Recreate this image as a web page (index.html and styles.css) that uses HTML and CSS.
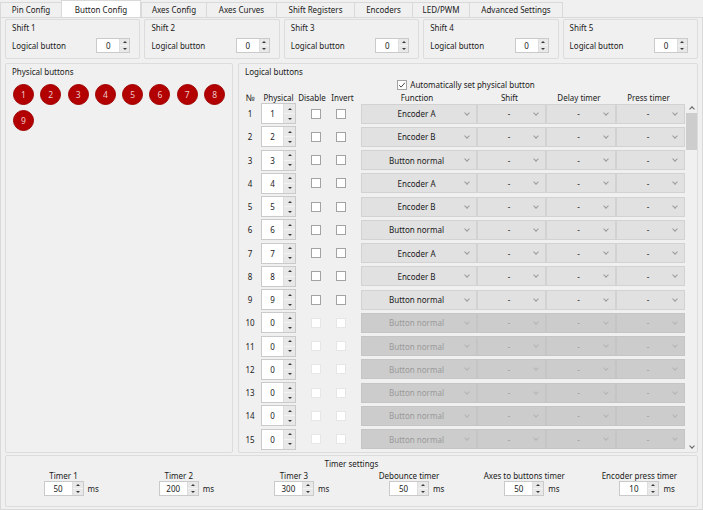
FILE: index.html
```html
<!DOCTYPE html>
<html>
<head>
<meta charset="utf-8">
<title>Button Config</title>
<link rel="stylesheet" href="styles.css">
</head>
<body>
<div class="window">
  <div class="tabs">
    <div class="tab t1">Pin Config</div>
    <div class="tab t2 active">Button Config</div>
    <div class="tab t3">Axes Config</div>
    <div class="tab t4">Axes Curves</div>
    <div class="tab t5">Shift Registers</div>
    <div class="tab t6">Encoders</div>
    <div class="tab t7">LED/PWM</div>
    <div class="tab t8 last">Advanced Settings</div>
  </div>
  <div class="pane">
    <div class="shifts">
      <div class="group">
        <div class="gtitle">Shift 1</div>
        <div class="shift-row"><span>Logical button</span><div class="spin spin-s"><span class="val">0</span><span class="arrows"><i class="up"></i><i class="dn"></i></span></div></div>
      </div>
      <div class="group">
        <div class="gtitle">Shift 2</div>
        <div class="shift-row"><span>Logical button</span><div class="spin spin-s"><span class="val">0</span><span class="arrows"><i class="up"></i><i class="dn"></i></span></div></div>
      </div>
      <div class="group">
        <div class="gtitle">Shift 3</div>
        <div class="shift-row"><span>Logical button</span><div class="spin spin-s"><span class="val">0</span><span class="arrows"><i class="up"></i><i class="dn"></i></span></div></div>
      </div>
      <div class="group">
        <div class="gtitle">Shift 4</div>
        <div class="shift-row"><span>Logical button</span><div class="spin spin-s"><span class="val">0</span><span class="arrows"><i class="up"></i><i class="dn"></i></span></div></div>
      </div>
      <div class="group">
        <div class="gtitle">Shift 5</div>
        <div class="shift-row"><span>Logical button</span><div class="spin spin-s"><span class="val">0</span><span class="arrows"><i class="up"></i><i class="dn"></i></span></div></div>
      </div>
    </div>

    <div class="main">
      <div class="group phys">
        <div class="gtitle">Physical buttons</div>
        <div class="circles">
          <span class="pb">1</span><span class="pb">2</span><span class="pb">3</span><span class="pb">4</span><span class="pb">5</span><span class="pb">6</span><span class="pb">7</span><span class="pb">8</span><span class="pb">9</span>
        </div>
      </div>

      <div class="group logical">
        <div class="gtitle">Logical buttons</div>
        <div class="auto"><span class="cb checked"><svg width="8" height="8" viewBox="0 0 8 8"><path d="M1.2 4.2 L3.1 6.1 L6.9 1.8" fill="none" stroke="#333" stroke-width="0.9"/></svg></span><span>Automatically set physical button</span></div>
        <div class="lhead">
          <span class="nosign">№</span><span>Physical</span><span>Disable</span><span>Invert</span><span></span><span class="hc">Function</span><span class="hc">Shift</span><span class="hc">Delay timer</span><span class="hc">Press timer</span>
        </div>
        <div class="scroll">
          <div class="rows">
            <div class="lrow"><span class="num">1</span><div class="spin spin-r"><span class="val">1</span><span class="arrows"><i class="up"></i><i class="dn"></i></span></div><span class="cdis"><span class="cb"></span></span><span class="cinv"><span class="cb"></span></span><span></span><span class="combo"><span class="txt">Encoder A</span></span><span class="combo"><span class="txt">-</span></span><span class="combo"><span class="txt">-</span></span><span class="combo"><span class="txt">-</span></span></div>
            <div class="lrow"><span class="num">2</span><div class="spin spin-r"><span class="val">2</span><span class="arrows"><i class="up"></i><i class="dn"></i></span></div><span class="cdis"><span class="cb"></span></span><span class="cinv"><span class="cb"></span></span><span></span><span class="combo"><span class="txt">Encoder B</span></span><span class="combo"><span class="txt">-</span></span><span class="combo"><span class="txt">-</span></span><span class="combo"><span class="txt">-</span></span></div>
            <div class="lrow"><span class="num">3</span><div class="spin spin-r"><span class="val">3</span><span class="arrows"><i class="up"></i><i class="dn"></i></span></div><span class="cdis"><span class="cb"></span></span><span class="cinv"><span class="cb"></span></span><span></span><span class="combo"><span class="txt">Button normal</span></span><span class="combo"><span class="txt">-</span></span><span class="combo"><span class="txt">-</span></span><span class="combo"><span class="txt">-</span></span></div>
            <div class="lrow"><span class="num">4</span><div class="spin spin-r"><span class="val">4</span><span class="arrows"><i class="up"></i><i class="dn"></i></span></div><span class="cdis"><span class="cb"></span></span><span class="cinv"><span class="cb"></span></span><span></span><span class="combo"><span class="txt">Encoder A</span></span><span class="combo"><span class="txt">-</span></span><span class="combo"><span class="txt">-</span></span><span class="combo"><span class="txt">-</span></span></div>
            <div class="lrow"><span class="num">5</span><div class="spin spin-r"><span class="val">5</span><span class="arrows"><i class="up"></i><i class="dn"></i></span></div><span class="cdis"><span class="cb"></span></span><span class="cinv"><span class="cb"></span></span><span></span><span class="combo"><span class="txt">Encoder B</span></span><span class="combo"><span class="txt">-</span></span><span class="combo"><span class="txt">-</span></span><span class="combo"><span class="txt">-</span></span></div>
            <div class="lrow"><span class="num">6</span><div class="spin spin-r"><span class="val">6</span><span class="arrows"><i class="up"></i><i class="dn"></i></span></div><span class="cdis"><span class="cb"></span></span><span class="cinv"><span class="cb"></span></span><span></span><span class="combo"><span class="txt">Button normal</span></span><span class="combo"><span class="txt">-</span></span><span class="combo"><span class="txt">-</span></span><span class="combo"><span class="txt">-</span></span></div>
            <div class="lrow"><span class="num">7</span><div class="spin spin-r"><span class="val">7</span><span class="arrows"><i class="up"></i><i class="dn"></i></span></div><span class="cdis"><span class="cb"></span></span><span class="cinv"><span class="cb"></span></span><span></span><span class="combo"><span class="txt">Encoder A</span></span><span class="combo"><span class="txt">-</span></span><span class="combo"><span class="txt">-</span></span><span class="combo"><span class="txt">-</span></span></div>
            <div class="lrow"><span class="num">8</span><div class="spin spin-r"><span class="val">8</span><span class="arrows"><i class="up"></i><i class="dn"></i></span></div><span class="cdis"><span class="cb"></span></span><span class="cinv"><span class="cb"></span></span><span></span><span class="combo"><span class="txt">Encoder B</span></span><span class="combo"><span class="txt">-</span></span><span class="combo"><span class="txt">-</span></span><span class="combo"><span class="txt">-</span></span></div>
            <div class="lrow"><span class="num">9</span><div class="spin spin-r"><span class="val">9</span><span class="arrows"><i class="up"></i><i class="dn"></i></span></div><span class="cdis"><span class="cb"></span></span><span class="cinv"><span class="cb"></span></span><span></span><span class="combo"><span class="txt">Button normal</span></span><span class="combo"><span class="txt">-</span></span><span class="combo"><span class="txt">-</span></span><span class="combo"><span class="txt">-</span></span></div>
            <div class="lrow off"><span class="num">10</span><div class="spin spin-r"><span class="val">0</span><span class="arrows"><i class="up"></i><i class="dn"></i></span></div><span class="cdis"><span class="cb"></span></span><span class="cinv"><span class="cb"></span></span><span></span><span class="combo"><span class="txt">Button normal</span></span><span class="combo"><span class="txt">-</span></span><span class="combo"><span class="txt">-</span></span><span class="combo"><span class="txt">-</span></span></div>
            <div class="lrow off"><span class="num">11</span><div class="spin spin-r"><span class="val">0</span><span class="arrows"><i class="up"></i><i class="dn"></i></span></div><span class="cdis"><span class="cb"></span></span><span class="cinv"><span class="cb"></span></span><span></span><span class="combo"><span class="txt">Button normal</span></span><span class="combo"><span class="txt">-</span></span><span class="combo"><span class="txt">-</span></span><span class="combo"><span class="txt">-</span></span></div>
            <div class="lrow off"><span class="num">12</span><div class="spin spin-r"><span class="val">0</span><span class="arrows"><i class="up"></i><i class="dn"></i></span></div><span class="cdis"><span class="cb"></span></span><span class="cinv"><span class="cb"></span></span><span></span><span class="combo"><span class="txt">Button normal</span></span><span class="combo"><span class="txt">-</span></span><span class="combo"><span class="txt">-</span></span><span class="combo"><span class="txt">-</span></span></div>
            <div class="lrow off"><span class="num">13</span><div class="spin spin-r"><span class="val">0</span><span class="arrows"><i class="up"></i><i class="dn"></i></span></div><span class="cdis"><span class="cb"></span></span><span class="cinv"><span class="cb"></span></span><span></span><span class="combo"><span class="txt">Button normal</span></span><span class="combo"><span class="txt">-</span></span><span class="combo"><span class="txt">-</span></span><span class="combo"><span class="txt">-</span></span></div>
            <div class="lrow off"><span class="num">14</span><div class="spin spin-r"><span class="val">0</span><span class="arrows"><i class="up"></i><i class="dn"></i></span></div><span class="cdis"><span class="cb"></span></span><span class="cinv"><span class="cb"></span></span><span></span><span class="combo"><span class="txt">Button normal</span></span><span class="combo"><span class="txt">-</span></span><span class="combo"><span class="txt">-</span></span><span class="combo"><span class="txt">-</span></span></div>
            <div class="lrow off"><span class="num">15</span><div class="spin spin-r"><span class="val">0</span><span class="arrows"><i class="up"></i><i class="dn"></i></span></div><span class="cdis"><span class="cb"></span></span><span class="cinv"><span class="cb"></span></span><span></span><span class="combo"><span class="txt">Button normal</span></span><span class="combo"><span class="txt">-</span></span><span class="combo"><span class="txt">-</span></span><span class="combo"><span class="txt">-</span></span></div>
          </div>
          <div class="vbar">
            <span class="sarrow s-up"></span>
            <span class="thumb"></span>
            <span class="track"></span>
            <span class="sarrow s-dn"></span>
          </div>
        </div>
      </div>
    </div>

    <div class="group timers">
      <div class="gtitle tcenter">Timer settings</div>
      <div class="tcols">
        <div class="tcol"><div class="tlabel">Timer 1</div><div class="trow"><span></span><div class="spin spin-t"><span class="val">50</span><span class="arrows"><i class="up"></i><i class="dn"></i></span></div><span class="ms">ms</span></div></div>
        <div class="tcol"><div class="tlabel">Timer 2</div><div class="trow"><span></span><div class="spin spin-t"><span class="val">200</span><span class="arrows"><i class="up"></i><i class="dn"></i></span></div><span class="ms">ms</span></div></div>
        <div class="tcol"><div class="tlabel">Timer 3</div><div class="trow"><span></span><div class="spin spin-t"><span class="val">300</span><span class="arrows"><i class="up"></i><i class="dn"></i></span></div><span class="ms">ms</span></div></div>
        <div class="tcol"><div class="tlabel">Debounce timer</div><div class="trow"><span></span><div class="spin spin-t"><span class="val">50</span><span class="arrows"><i class="up"></i><i class="dn"></i></span></div><span class="ms">ms</span></div></div>
        <div class="tcol"><div class="tlabel">Axes to buttons timer</div><div class="trow"><span></span><div class="spin spin-t"><span class="val">50</span><span class="arrows"><i class="up"></i><i class="dn"></i></span></div><span class="ms">ms</span></div></div>
        <div class="tcol"><div class="tlabel">Encoder press timer</div><div class="trow"><span></span><div class="spin spin-t"><span class="val">10</span><span class="arrows"><i class="up"></i><i class="dn"></i></span></div><span class="ms">ms</span></div></div>
      </div>
    </div>
  </div>
</div>
</body>
</html>
```

FILE: styles.css
```css
* { box-sizing: border-box; margin: 0; padding: 0; }
html, body { width: 703px; height: 510px; overflow: hidden; }
body {
  background: #f0f0f0;
  font-family: "Noto Sans", "Open Sans", sans-serif;
  font-size: 8px;
  line-height: 11px;
  color: #1a1a1a;
}
.window { width: 703px; height: 510px; display: flex; flex-direction: column; }

/* tabs */
.tabs { display: flex; align-items: flex-end; height: 17px; }
.tab {
  height: 15px; line-height: 14px; text-align: center; white-space: nowrap;
  border-left: 1px solid #d9d9d9; border-top: 1px solid #d9d9d9;
  background: #f0f0f0;
}
.tab.last { border-right: 1px solid #d9d9d9; }
.tab.active { height: 18px; line-height: 17px; background: #fff; margin-bottom: -1px; border-right: 1px solid #d9d9d9; }
.t1 { width: 61px; } .t2 { width: 80px; } .t3 { width: 65px; } .t4 { width: 70px; }
.t5 { width: 78px; } .t6 { width: 58px; } .t7 { width: 57px; } .t8 { width: 94px; }

.pane {
  height: 493px; border: 1px solid #d9d9d9; padding: 1px 4px 1px 4px;
  display: flex; flex-direction: column;
}

.group { border: 1px solid #dcdcdc; border-radius: 2px; }
.gtitle { padding: 2px 0 0 6px; height: 13px; white-space: nowrap; }

/* shifts */
.shifts { display: grid; grid-template-columns: repeat(5, 1fr); gap: 4px; height: 40px; }
.shift-row { display: flex; align-items: center; justify-content: space-between; margin-top: 5px; padding: 0 9px 0 6px; }

/* spin boxes */
.spin { display: flex; background: #fff; border: 1px solid #cacaca; }
.spin .val { flex: 1; text-align: center; display: flex; align-items: center; justify-content: center; }
.spin .arrows { width: 10px; display: flex; flex-direction: column; background: #e8e8e8; border-left: 1px solid #dedede; }
.arrows i { flex: 1; display: flex; align-items: center; justify-content: center; }
.arrows i::before { content: ''; border-left: 2px solid transparent; border-right: 2px solid transparent; }
.arrows .up::before { border-bottom: 2px solid #3a3a3a; }
.arrows .dn::before { border-top: 2px solid #3a3a3a; }
.arrows .up { border-bottom: 1px solid #f4f4f4; }
.spin-s { width: 34px; height: 15px; }
.spin-r { width: 35px; height: 21px; }
.spin-r .arrows { width: 12px; }
.spin-t { width: 40px; height: 15px; }
.spin-t .arrows { width: 11px; }

/* main */
.main { display: flex; gap: 5px; height: 390px; margin-top: 4px; }
.phys { width: 229px; }
.logical { flex: 1; display: flex; flex-direction: column; }
.circles { display: flex; flex-wrap: wrap; column-gap: 6.3px; row-gap: 5px; padding: 7px 0 0 7px; }
.pb {
  width: 21px; height: 21px; border-radius: 50%;
  background: #b30000; border: 1px solid #9e0000; color: #eccaca;
  display: flex; align-items: center; justify-content: center; font-size: 8.5px;
}

.auto { display: flex; justify-content: center; align-items: center; gap: 3px; margin-top: 2px; height: 11px; padding-right: 4px; }
.cb { display: block; width: 10px; height: 10px; border: 1px solid #a3a3a3; background: #fff; }
.cb.checked { display: flex; align-items: center; justify-content: center; }

.lhead, .lrow {
  display: grid;
  grid-template-columns: 22px 35px 32px 29px 4px 116px 69px 70px 69px;
}
.lhead { height: 10px; line-height: 10px; margin-top: 3px; text-align: center; white-space: nowrap; }
.lhead .nosign { font-size: 9px; }
.lhead .hc { padding-right: 4px; }

.scroll { flex: 1; display: flex; min-height: 0; }
.rows { width: 446px; display: flex; flex-direction: column; gap: 3.25px; overflow: hidden; }
.lrow { height: 20px; align-items: center; flex: none; }
.num { text-align: center; }
.cdis { padding-left: 15px; }
.cinv { padding-left: 8px; }
.combo {
  height: 20px; display: flex; align-items: center;
  background: #e1e1e1; border: 1px solid #d2d2d2; white-space: nowrap;
}
.combo .txt { flex: 1; text-align: center; padding-left: 6px; }
.combo::after {
  content: ''; width: 3px; height: 3px; margin: 0 7px 2px 0;
  border-right: 1px solid #9a9a9a; border-bottom: 1px solid #9a9a9a;
  transform: rotate(45deg);
}
.off .combo { background: #cccccc; border-color: #c5c5c5; color: #9a9a9a; }
.off .combo::after { border-color: #b4b4b4; }
.off .cb { border-color: #e6e6e6; }

.vbar { width: 11px; margin-left: 1px; display: flex; flex-direction: column; }
.sarrow { height: 10px; display: flex; align-items: center; justify-content: center; }
.sarrow::before {
  content: ''; width: 3px; height: 3px;
  border-right: 1px solid #606060; border-bottom: 1px solid #606060;
}
.s-up::before { transform: rotate(-135deg); margin-top: 2px; }
.s-dn::before { transform: rotate(45deg); margin-bottom: 2px; }
.thumb { height: 37px; background: #cdcdcd; }
.track { flex: 1; }

/* timers */
.timers { height: 52px; margin-top: 2px; }
.tcenter { padding-left: 0; text-align: center; }
.tcols { display: grid; grid-template-columns: repeat(6, 1fr); margin-top: 1px; }
.tcol { display: flex; flex-direction: column; align-items: stretch; }
.tlabel { text-align: center; white-space: nowrap; height: 11px; }
.trow { display: grid; grid-template-columns: 1fr auto 1fr; align-items: center; }
.ms { padding-left: 4px; }
```
